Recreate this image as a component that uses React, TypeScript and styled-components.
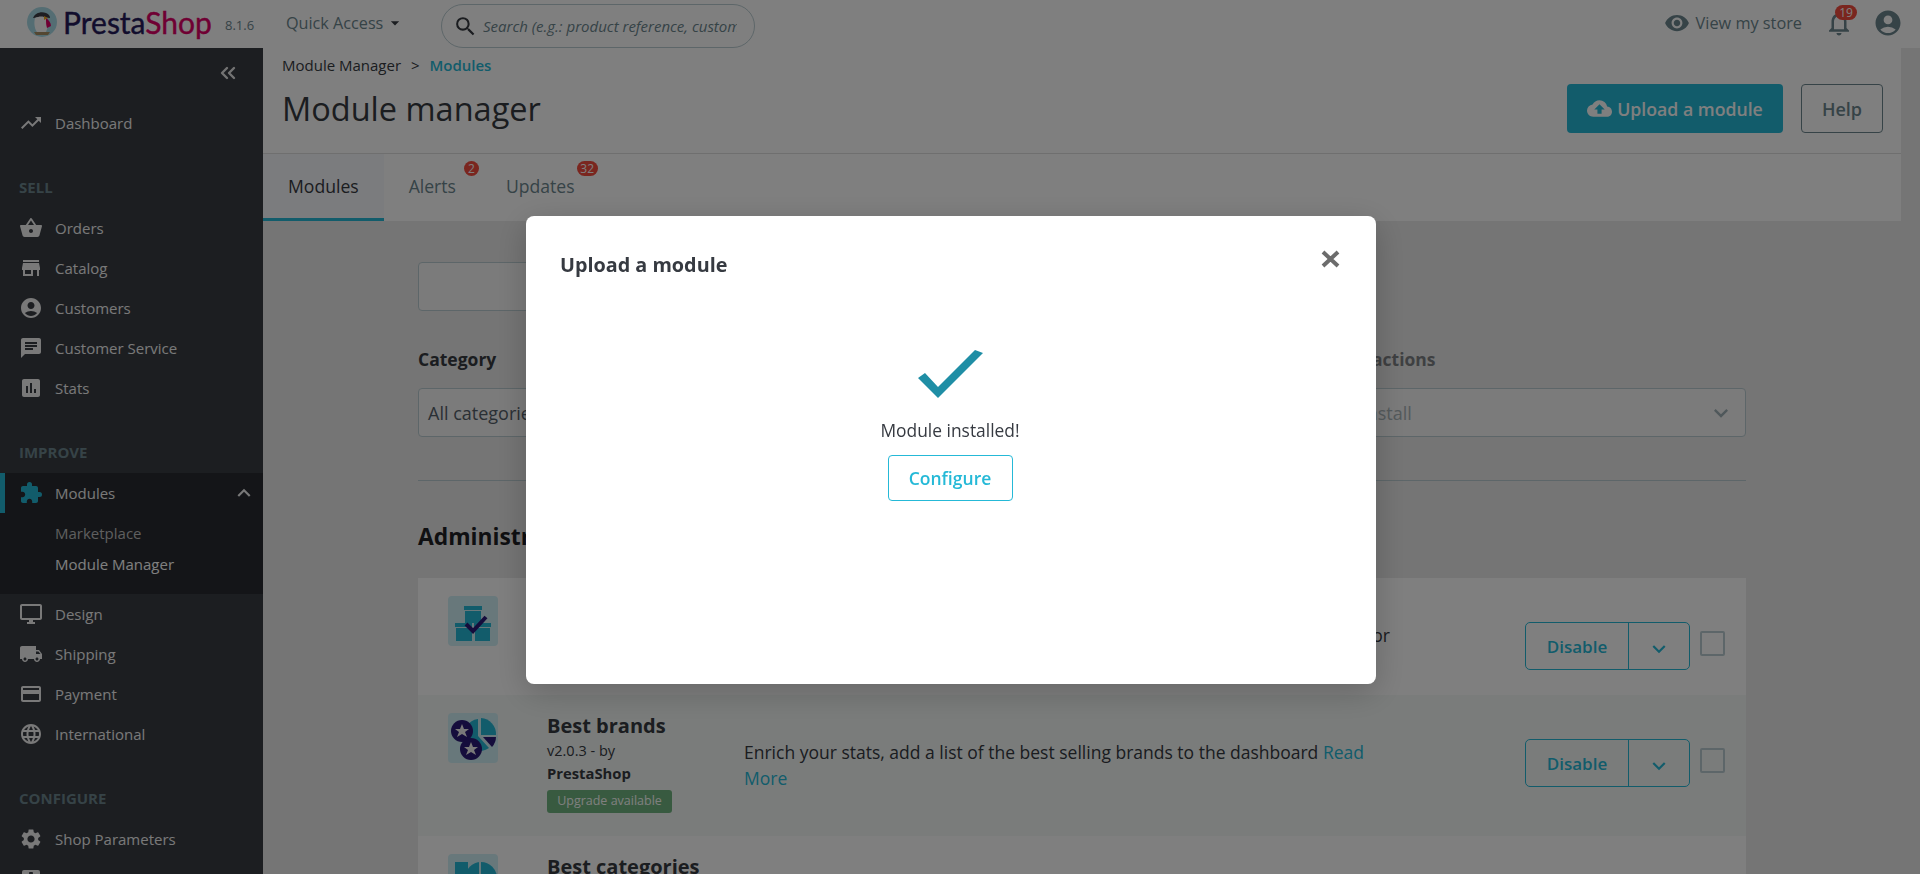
import React from "react";
import styled, { createGlobalStyle } from "styled-components";
import { ChevronsLeft } from "lucide-react";
import {
  MdAccountCircle,
  MdAssessment,
  MdArrowDropDown,
  MdChat,
  MdCloudUpload,
  MdCreditCard,
  MdExpandMore,
  MdExtension,
  MdKeyboardArrowDown,
  MdKeyboardArrowUp,
  MdLanguage,
  MdLocalShipping,
  MdNotificationsNone,
  MdOutlineDesktopWindows,
  MdRemoveRedEye,
  MdSearch,
  MdSettings,
  MdSettingsApplications,
  MdShoppingBasket,
  MdStore,
  MdTrendingUp,
} from "react-icons/md";

const GlobalStyle = createGlobalStyle`
  html, body {
    margin: 0;
    height: 874px;
    overflow: hidden;
    background: #eaeaea;
    font-family: "Open Sans", "Liberation Sans", sans-serif;
    color: #363a41;
  }
  * { box-sizing: border-box; }
`;

const Logo = () => (
  <svg width="30" height="30" viewBox="0 0 30 30">
    <circle cx="15" cy="15" r="15" fill="#a9dbe6" />
    <path d="M6 11c2-5 8-7 13-5 3 1 4 3 4 5-6-1-11-1-17 0z" fill="#3c3c44" />
    <path d="M8 11c4-2 9-2 11 0 2 5 2 10 0 14H10C7 21 7 15 8 11z" fill="#fff" />
    <path d="M19 11c3 2 5 5 5 8l-4 2c-1-3-1-6-1-10z" fill="#df0067" />
    <path d="M17 9l4 2-4 2z" fill="#f5a623" />
    <path d="M7 25h16l-2 3H9z" fill="#a98f64" />
  </svg>
);

const BoxesIcon = () => (
  <svg width="50" height="50" viewBox="0 0 50 50">
    <path d="M16 10h18v4H16zM17 15h16v12H17z" fill="#25b9d7" />
    <path d="M7 27h17v4H7zM8 32h16v13H8zM26 27h17v4H26zM27 32h15v13H27z" fill="#25b9d7" />
    <path d="M18 28l7 7 13-14" fill="none" stroke="#2b1a78" strokeWidth="4" />
  </svg>
);

const BrandsIcon = () => (
  <svg width="50" height="50" viewBox="0 0 50 50">
    <path d="M33 5a16 16 0 0 1 15 17H33z" fill="#25b9d7" />
    <path d="M30 6v17l11 12a16 16 0 1 1-11-29z" fill="#25b9d7" />
    <path d="M35 24h13a15 15 0 0 1-4 10z" fill="#2b1a78" />
    <circle cx="14" cy="18" r="11" fill="#2b1a78" />
    <circle cx="23" cy="36" r="11" fill="#2b1a78" />
    <path d="M14 11l2 5h5l-4 3 2 5-5-3-5 3 2-5-4-3h5zM23 29l2 5h5l-4 3 2 5-5-3-5 3 2-5-4-3h5z" fill="#f2f2f2" />
  </svg>
);

const CategoriesIcon = () => (
  <svg width="50" height="50" viewBox="0 0 50 50">
    <path d="M7 8h13v14H7z" fill="#25b9d7" />
    <circle cx="33" cy="24" r="16" fill="#25b9d7" />
    <path d="M31 6h2v36h-2z" fill="#d0f0f6" />
  </svg>
);

const sellItems = [
  { label: "Orders", icon: <MdShoppingBasket /> },
  { label: "Catalog", icon: <MdStore /> },
  { label: "Customers", icon: <MdAccountCircle /> },
  { label: "Customer Service", icon: <MdChat /> },
  { label: "Stats", icon: <MdAssessment /> },
];

const improveItems = [
  { label: "Design", icon: <MdOutlineDesktopWindows /> },
  { label: "Shipping", icon: <MdLocalShipping /> },
  { label: "Payment", icon: <MdCreditCard /> },
  { label: "International", icon: <MdLanguage /> },
];

const App = () => {
  return (
    <>
      <GlobalStyle />
      <TopBar>
        <LogoBox>
          <Logo />
          <Wordmark>
            Presta<em>Shop</em>
          </Wordmark>
          <Version>8.1.6</Version>
        </LogoBox>
        <QuickAccess>
          Quick Access <MdArrowDropDown />
        </QuickAccess>
        <SearchBox>
          <MdSearch />
          <span>Search (e.g.: product reference, customer name…)</span>
        </SearchBox>
        <TopRight>
          <StoreLink>
            <MdRemoveRedEye />
            View my store
          </StoreLink>
          <Bell>
            <MdNotificationsNone />
            <BellCount>19</BellCount>
          </Bell>
          <UserIcon>
            <MdAccountCircle />
          </UserIcon>
        </TopRight>
      </TopBar>

      <Layout>
        <Sidebar>
          <CollapseRow>
            <ChevronsLeft size={24} strokeWidth={2.4} />
          </CollapseRow>
          <NavItem>
            <MdTrendingUp />
            Dashboard
          </NavItem>
          <SectionLabel>SELL</SectionLabel>
          {sellItems.map((item) => (
            <NavItem key={item.label}>
              {item.icon}
              {item.label}
            </NavItem>
          ))}
          <SectionLabel>IMPROVE</SectionLabel>
          <ActiveItem>
            <MdExtension />
            Modules
            <MdKeyboardArrowUp />
          </ActiveItem>
          <SubMenu>
            <SubItem>Marketplace</SubItem>
            <SubItem $active>Module Manager</SubItem>
          </SubMenu>
          {improveItems.map((item) => (
            <NavItem key={item.label}>
              {item.icon}
              {item.label}
            </NavItem>
          ))}
          <SectionLabel>CONFIGURE</SectionLabel>
          <NavItem>
            <MdSettings />
            Shop Parameters
          </NavItem>
          <NavItem>
            <MdSettingsApplications />
            Advanced Parameters
          </NavItem>
        </Sidebar>

        <Main>
          <PageHead>
            <div>
              <Crumbs>
                Module Manager <i>&gt;</i> <b>Modules</b>
              </Crumbs>
              <Title>Module manager</Title>
            </div>
            <HeadButtons>
              <UploadButton>
                <MdCloudUpload />
                Upload a module
              </UploadButton>
              <HelpButton>Help</HelpButton>
            </HeadButtons>
          </PageHead>
          <Tabs>
            <Tab $active>Modules</Tab>
            <Tab>
              Alerts<TabCount $wide={false}>2</TabCount>
            </Tab>
            <Tab>
              Updates<TabCount $wide>32</TabCount>
            </Tab>
          </Tabs>

          <Content>
            <SearchInput />
            <Filters>
              <div>
                <FilterLabel>Category</FilterLabel>
                <Select>All categories</Select>
              </div>
              <div />
              <div>
                <FilterLabel $muted>Bulk actions</FilterLabel>
                <Select $muted>
                  Uninstall
                  <MdExpandMore />
                </Select>
              </div>
            </Filters>
            <Divider />
            <Heading>Administration</Heading>
            <Card>
              <Row $height={117}>
                <ModuleIcon>
                  <BoxesIcon />
                </ModuleIcon>
                <Info />
                <Desc $right>or</Desc>
                <RowActions />
              </Row>
              <Row $height={141} $tint>
                <ModuleIcon>
                  <BrandsIcon />
                </ModuleIcon>
                <Info>
                  <ModuleName>Best brands</ModuleName>
                  <ModuleMeta>v2.0.3 - by</ModuleMeta>
                  <ModuleAuthor>PrestaShop</ModuleAuthor>
                  <UpgradeBadge>Upgrade available</UpgradeBadge>
                </Info>
                <Desc>
                  Enrich your stats, add a list of the best selling brands to the dashboard{" "}
                  <a>Read More</a>
                </Desc>
                <RowActions />
              </Row>
              <Row $height={141}>
                <ModuleIcon>
                  <CategoriesIcon />
                </ModuleIcon>
                <Info>
                  <ModuleName>Best categories</ModuleName>
                </Info>
              </Row>
            </Card>
          </Content>
        </Main>
      </Layout>

      <Backdrop>
        <Modal>
          <ModalHead>
            <ModalTitle>Upload a module</ModalTitle>
            <CloseIcon>
              <svg width="19" height="18" viewBox="0 0 19 18">
                <path d="M2 2l15 14M17 2L2 16" fill="none" stroke="#6c6c6c" strokeWidth="4" />
              </svg>
            </CloseIcon>
          </ModalHead>
          <ModalBody>
            <svg width="65" height="49" viewBox="0 0 65 49">
              <polygon points="0,29 7,24 20,38 57,1 65,4 20,49" fill="#1f8ea5" />
            </svg>
            <ModalText>Module installed!</ModalText>
            <ConfigureButton>Configure</ConfigureButton>
          </ModalBody>
        </Modal>
      </Backdrop>
    </>
  );
};

const RowActions = () => (
  <Actions>
    <DisableGroup>
      <DisableLabel>Disable</DisableLabel>
      <DisableCaret>
        <MdKeyboardArrowDown />
      </DisableCaret>
    </DisableGroup>
    <CheckBox />
  </Actions>
);

export default App;

const TopBar = styled.header`
  height: 48px;
  background: #fff;
  display: flex;
  align-items: flex-start;
  padding-left: 27px;
`;

const LogoBox = styled.div`
  width: 259px;
  height: 44px;
  padding-top: 7px;
  display: flex;
  align-items: flex-start;
`;

const Wordmark = styled.div`
  margin-left: 6px;
  width: 152px;
  font-family: Lato, sans-serif;
  font-size: 30px;
  line-height: 30px;
  font-weight: 400;
  -webkit-text-stroke: 0.4px currentColor;
  color: #251b5b;

  em {
    font-style: normal;
    color: #df0067;
  }
`;

const Version = styled.div`
  margin-left: 10px;
  font-size: 13px;
  line-height: 36px;
  color: #6c868e;
`;

const QuickAccess = styled.div`
  width: 155px;
  height: 46px;
  display: flex;
  align-items: center;
  font-size: 16.2px;
  color: #6c868e;

  svg {
    font-size: 20px;
    margin-left: 2px;
    color: #363a41;
  }
`;

const SearchBox = styled.div`
  width: 314px;
  height: 44px;
  margin-top: 4px;
  border: 1px solid #bbcdd2;
  border-radius: 22px;
  display: flex;
  align-items: center;
  padding-left: 11px;
  font-size: 15px;
  font-style: italic;
  color: #6c868e;

  svg {
    font-size: 25px;
    flex: none;
    color: #363a41;
  }

  span {
    width: 254px;
    margin-left: 5px;
    overflow: hidden;
    white-space: nowrap;
  }
`;

const TopRight = styled.div`
  margin-left: auto;
  height: 46px;
  display: flex;
  align-items: center;
  padding-right: 17px;
`;

const StoreLink = styled.div`
  display: flex;
  align-items: center;
  font-size: 16.3px;
  color: #6c868e;

  svg {
    font-size: 26px;
    margin-right: 6px;
    color: #6c868e;
  }
`;

const Bell = styled.div`
  position: relative;
  margin-left: 22px;
  width: 30px;
  height: 30px;
  font-size: 30px;
  color: #6c868e;
  display: flex;
`;

const BellCount = styled.span`
  position: absolute;
  top: -3px;
  left: 11px;
  width: 22px;
  height: 15px;
  border-radius: 8px;
  background: #f54c3e;
  color: #fff;
  font-size: 12px;
  line-height: 15px;
  text-align: center;
`;

const UserIcon = styled.div`
  margin-left: 19px;
  width: 30px;
  height: 30px;
  font-size: 30px;
  color: #6c868e;
  display: flex;
`;

const Layout = styled.div`
  display: flex;
  height: 826px;
  overflow: hidden;
`;

const Sidebar = styled.nav`
  width: 263px;
  flex: none;
  background: #383c43;
`;

const CollapseRow = styled.div`
  height: 55px;
  padding: 13px 23px 0 0;
  display: flex;
  justify-content: flex-end;
  color: #e6e6e6;
`;

const NavItem = styled.div`
  height: 40px;
  display: flex;
  align-items: center;
  padding-left: 19px;
  font-size: 15px;
  color: #f2f2f2;

  svg {
    font-size: 24px;
    margin-right: 12px;
    flex: none;
  }
`;

const SectionLabel = styled.div`
  height: 65px;
  display: flex;
  align-items: flex-end;
  padding: 0 0 10px 19px;
  font-size: 15px;
  line-height: 22px;
  font-weight: 700;
  color: #6c868e;
`;

const ActiveItem = styled(NavItem)`
  background: #282b31;
  box-shadow: inset 5px 0 0 #25b9d7;

  svg:first-child {
    color: #25b9d7;
  }

  svg:last-child {
    margin: 0 0 0 auto;
    transform: translateX(-6px);
    font-size: 26px;
  }
`;

const SubMenu = styled.div`
  height: 81px;
  padding-top: 5px;
  background: #282b31;
`;

const SubItem = styled.div<{ $active?: boolean }>`
  height: 31px;
  padding-left: 55px;
  font-size: 15px;
  line-height: 31px;
  color: ${(p) => (p.$active ? "#fff" : "#bebebe")};
`;

const Main = styled.main`
  width: 1638px;
  flex: none;
`;

const PageHead = styled.div`
  height: 106px;
  background: #fff;
  border-bottom: 1px solid #dfdfdf;
  display: flex;
  justify-content: space-between;
  padding: 6px 18px 0 19px;
`;

const Crumbs = styled.div`
  font-size: 15px;
  line-height: 22px;
  color: #363a41;

  i {
    font-style: normal;
    margin: 0 6px;
  }

  b {
    font-weight: 600;
    color: #25b9d7;
  }
`;

const Title = styled.h1`
  margin: 11px 0 0;
  font-size: 32.5px;
  line-height: 44px;
  font-weight: 400;
  color: #363a41;
`;

const HeadButtons = styled.div`
  display: flex;
  gap: 18px;
  padding-top: 30px;
`;

const UploadButton = styled.div`
  width: 216px;
  height: 49px;
  border-radius: 4px;
  background: #25b9d7;
  color: #fff;
  display: flex;
  align-items: center;
  justify-content: center;
  gap: 5px;
  font-size: 17.7px;
  font-weight: 600;

  svg {
    font-size: 25px;
  }
`;

const HelpButton = styled.div`
  width: 82px;
  height: 49px;
  border: 1px solid #6c868e;
  border-radius: 4px;
  color: #6c868e;
  display: flex;
  align-items: center;
  justify-content: center;
  font-size: 18px;
  font-weight: 600;
`;

const Tabs = styled.div`
  height: 67px;
  background: #fff;
  display: flex;
`;

const Tab = styled.div<{ $active?: boolean }>`
  position: relative;
  padding: 0 25px 3px;
  display: flex;
  align-items: center;
  font-size: 17.6px;
  color: ${(p) => (p.$active ? "#363a41" : "#6c868e")};
  background: ${(p) => (p.$active ? "#f6f8fc" : "transparent")};
  box-shadow: ${(p) => (p.$active ? "inset 0 -3px 0 #25b9d7" : "none")};
`;

const TabCount = styled.span<{ $wide: boolean }>`
  position: absolute;
  top: 7px;
  right: 2px;
  width: ${(p) => (p.$wide ? "21px" : "15px")};
  height: 15px;
  border-radius: 8px;
  background: #f54c3e;
  color: #fff;
  font-size: 12px;
  line-height: 15px;
  text-align: center;
`;

const Content = styled.div`
  padding: 41px 155px 0 155px;
`;

const SearchInput = styled.div`
  width: 800px;
  height: 49px;
  border: 1px solid #bbcdd2;
  border-radius: 4px;
  background: #f6f6f6;
`;

const Filters = styled.div`
  margin-top: 36px;
  display: grid;
  grid-template-columns: 1fr 1fr 418px;
  column-gap: 55px;
`;

const FilterLabel = styled.div<{ $muted?: boolean }>`
  height: 24px;
  font-size: 17.5px;
  line-height: 24px;
  font-weight: 700;
  color: #363a41;
  opacity: ${(p) => (p.$muted ? 0.6 : 1)};
  margin-bottom: 17px;
`;

const Select = styled.div<{ $muted?: boolean }>`
  height: 49px;
  border: 1px solid #bbcdd2;
  border-radius: 4px;
  background: #f6f6f6;
  display: flex;
  align-items: center;
  justify-content: space-between;
  padding: 0 10px 0 9px;
  font-size: 18px;
  color: ${(p) => (p.$muted ? "#a9b4b8" : "#55606a")};

  svg {
    font-size: 28px;
    color: #9fb0b6;
  }
`;

const Divider = styled.div`
  margin-top: 43px;
  height: 1px;
  background: #bbcdd2;
`;

const Heading = styled.h2`
  margin: 41px 0 26px;
  font-size: 22.8px;
  line-height: 30px;
  font-weight: 700;
  color: #1e2024;
`;

const Card = styled.div`
  background: #fff;
  border-radius: 6px 6px 0 0;
`;

const Row = styled.div<{ $height: number; $tint?: boolean }>`
  height: ${(p) => p.$height}px;
  padding: 18px 21px 0 30px;
  display: flex;
  align-items: flex-start;
  background: ${(p) => (p.$tint ? "#f4f8f7" : "#fff")};
`;

const ModuleIcon = styled.div`
  width: 50px;
  height: 50px;
  flex: none;
  border-radius: 4px;
  background: #d0f0f6;
  display: flex;
`;

const Info = styled.div`
  width: 197px;
  flex: none;
  margin-left: 49px;
`;

const ModuleName = styled.div`
  font-size: 20px;
  line-height: 26px;
  font-weight: 700;
  color: #363a41;
`;

const ModuleMeta = styled.div`
  margin-top: 2px;
  font-size: 14.5px;
  line-height: 20px;
  color: #363a41;
`;

const ModuleAuthor = styled.div`
  margin-top: 2px;
  font-size: 14.8px;
  line-height: 20px;
  font-weight: 700;
  color: #363a41;
`;

const UpgradeBadge = styled.div`
  margin-top: 7px;
  width: 125px;
  height: 23px;
  border-radius: 3px;
  background: #70b580;
  color: #fff;
  font-size: 12.5px;
  line-height: 22px;
  text-align: center;
`;

const Desc = styled.div<{ $right?: boolean }>`
  width: 646px;
  flex: none;
  margin-top: 26px;
  font-size: 17.5px;
  line-height: 26px;
  color: #363a41;
  text-align: ${(p) => (p.$right ? "right" : "left")};

  a {
    color: #25b9d7;
  }
`;

const Actions = styled.div`
  margin: 26px 0 0 auto;
  display: flex;
  gap: 10px;
`;

const DisableGroup = styled.div`
  width: 165px;
  height: 48px;
  border: 1px solid #25b9d7;
  border-radius: 5px;
  display: flex;
  color: #25b9d7;
`;

const DisableLabel = styled.div`
  width: 103px;
  border-right: 1px solid #25b9d7;
  display: flex;
  align-items: center;
  justify-content: center;
  font-size: 17px;
  font-weight: 600;
`;

const DisableCaret = styled.div`
  flex: 1;
  display: flex;
  align-items: center;
  justify-content: center;
  padding-top: 5px;
  font-size: 26px;
`;

const CheckBox = styled.div`
  width: 25px;
  height: 25px;
  margin-top: 9px;
  border: 2px solid #bbcdd2;
  border-radius: 2px;
`;

const Backdrop = styled.div`
  position: fixed;
  inset: 0;
  z-index: 10;
  background: rgba(0, 0, 0, 0.5);
  padding: 216px 18px 0 0;
  display: flex;
  justify-content: center;
  align-items: flex-start;
`;

const Modal = styled.div`
  width: 850px;
  height: 468px;
  border-radius: 8px;
  background: #fff;
  box-shadow: 0 8px 32px rgba(0, 0, 0, 0.2);
`;

const ModalHead = styled.div`
  display: flex;
  justify-content: space-between;
  padding: 34px 36px 0 34px;
`;

const ModalTitle = styled.div`
  font-size: 19.8px;
  line-height: 30px;
  font-weight: 700;
  color: #363a41;
`;

const CloseIcon = styled.div`
  display: flex;
`;

const ModalBody = styled.div`
  margin-top: 69px;
  padding-right: 2px;
  display: flex;
  flex-direction: column;
  align-items: center;
`;

const ModalText = styled.div`
  margin-top: 20px;
  font-size: 17.4px;
  line-height: 24px;
  color: #363a41;
`;

const ConfigureButton = styled.div`
  margin-top: 13px;
  width: 125px;
  height: 46px;
  border: 1px solid #25b9d7;
  border-radius: 4px;
  color: #25b9d7;
  display: flex;
  align-items: center;
  justify-content: center;
  font-size: 17.5px;
  font-weight: 600;
`;
